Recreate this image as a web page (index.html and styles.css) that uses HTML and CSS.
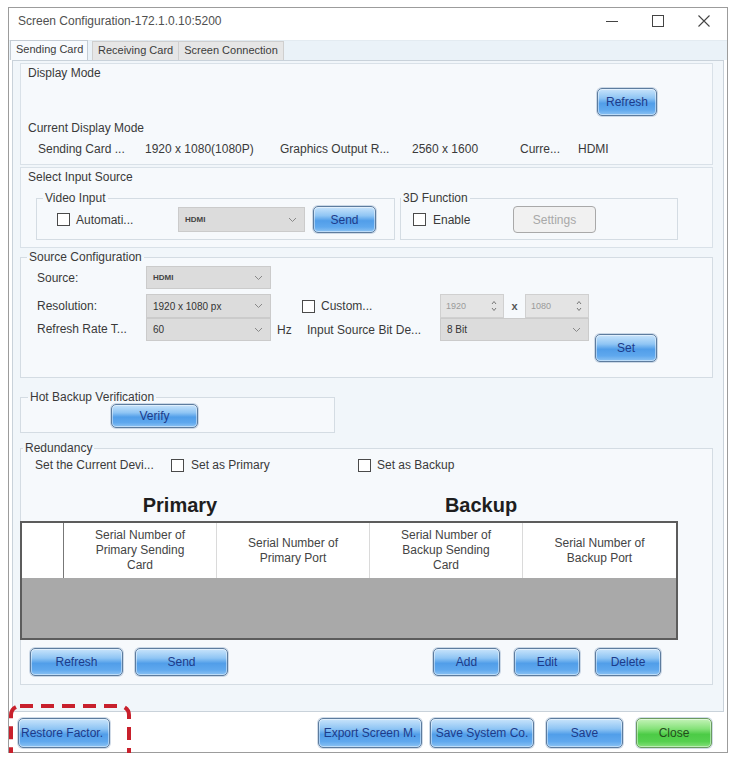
FILE: index.html
```html
<!DOCTYPE html>
<html>
<head>
    <title>Screen Configuration</title>
    <meta charset="UTF-8">
    <link rel="stylesheet" href="styles.css">
</head>
<body>
<div class="window">
    <div class="titlebar">
        <span class="title">Screen Configuration-172.1.0.10:5200</span>
        <div class="controls">
            <span class="ctl"><svg width="14" height="14" viewBox="0 0 14 14"><line x1="1" y1="7.5" x2="13" y2="7.5" stroke="#444" stroke-width="1"/></svg></span>
            <span class="ctl"><svg width="14" height="14" viewBox="0 0 14 14"><rect x="1.5" y="1.5" width="11" height="11" fill="none" stroke="#444" stroke-width="1"/></svg></span>
            <span class="ctl"><svg width="14" height="14" viewBox="0 0 14 14"><path d="M1.5 1.5 L12.5 12.5 M12.5 1.5 L1.5 12.5" stroke="#444" stroke-width="1.1"/></svg></span>
        </div>
    </div>

    <div class="tabs">
        <span class="tab active">Sending Card</span>
        <span class="tab">Receiving Card</span>
        <span class="tab">Screen Connection</span>
    </div>

    <div class="pane">
        <!-- display mode -->
        <div class="group display-mode">
            <div class="group-title">Display Mode</div>
            <div class="refresh-row"><button class="btn btn-refresh">Refresh</button></div>
            <div class="group-title sub">Current Display Mode</div>
            <div class="info-row">
                <span>Sending Card ...</span>
                <span>1920 x 1080(1080P)</span>
                <span>Graphics Output R...</span>
                <span>2560 x 1600</span>
                <span>Curre...</span>
                <span>HDMI</span>
            </div>
        </div>

        <!-- input source -->
        <div class="group input-source">
            <div class="group-title">Select Input Source</div>
            <div class="subgroups">
                <fieldset class="video-input">
                    <legend>Video Input</legend>
                    <div class="row">
                        <span class="check"></span>
                        <span class="auto-label">Automati...</span>
                        <div class="combo combo-video"><span class="small-caps">HDMI</span><svg class="chev" width="9" height="6" viewBox="0 0 9 6"><path d="M1 1 L4.5 4.5 L8 1" fill="none" stroke="#888" stroke-width="1"/></svg></div>
                        <button class="btn btn-send">Send</button>
                    </div>
                </fieldset>
                <fieldset class="three-d">
                    <legend>3D Function</legend>
                    <div class="row">
                        <span class="check"></span>
                        <span class="enable-label">Enable</span>
                        <button class="btn-disabled">Settings</button>
                    </div>
                </fieldset>
            </div>
        </div>

        <!-- source configuration -->
        <fieldset class="box source-config">
            <legend>Source Configuration</legend>
            <div class="src-row">
                <span class="src-label">Source:</span>
                <div class="combo combo-src"><span class="small-caps">HDMI</span><svg class="chev" width="9" height="6" viewBox="0 0 9 6"><path d="M1 1 L4.5 4.5 L8 1" fill="none" stroke="#888" stroke-width="1"/></svg></div>
            </div>
            <div class="src-row second">
                <span class="src-label">Resolution:</span>
                <div class="combo combo-src"><span>1920 x 1080 px</span><svg class="chev" width="9" height="6" viewBox="0 0 9 6"><path d="M1 1 L4.5 4.5 L8 1" fill="none" stroke="#888" stroke-width="1"/></svg></div>
                <div class="custom">
                    <span class="check"></span>
                    <span>Custom...</span>
                </div>
                <div class="spin"><span>1920</span><svg width="6" height="12" viewBox="0 0 6 12"><path d="M1 4 L3 1.5 L5 4 M1 8 L3 10.5 L5 8" fill="none" stroke="#777" stroke-width="1"/></svg></div>
                <span class="times">x</span>
                <div class="spin"><span>1080</span><svg width="6" height="12" viewBox="0 0 6 12"><path d="M1 4 L3 1.5 L5 4 M1 8 L3 10.5 L5 8" fill="none" stroke="#777" stroke-width="1"/></svg></div>
            </div>
            <div class="src-row third">
                <span class="src-label">Refresh Rate T...</span>
                <div class="combo combo-src"><span>60</span><svg class="chev" width="9" height="6" viewBox="0 0 9 6"><path d="M1 1 L4.5 4.5 L8 1" fill="none" stroke="#888" stroke-width="1"/></svg></div>
                <span class="hz">Hz</span>
                <span class="bit-label">Input Source Bit De...</span>
                <div class="combo combo-bit"><span>8 Bit</span><svg class="chev" width="9" height="6" viewBox="0 0 9 6"><path d="M1 1 L4.5 4.5 L8 1" fill="none" stroke="#888" stroke-width="1"/></svg></div>
                <button class="btn btn-set">Set</button>
            </div>
        </fieldset>

        <!-- hot backup -->
        <fieldset class="box hot-backup">
            <legend>Hot Backup Verification</legend>
            <button class="btn btn-verify">Verify</button>
        </fieldset>

        <!-- redundancy -->
        <fieldset class="box redundancy">
            <legend>Redundancy</legend>
            <div class="set-row">
                <span class="set-label">Set the Current Devi...</span>
                <span class="check"></span>
                <span class="set-primary">Set as Primary</span>
                <span class="check"></span>
                <span class="set-backup">Set as Backup</span>
            </div>
            <div class="side-titles">
                <span>Primary</span>
                <span>Backup</span>
            </div>
            <table class="serials">
                <colgroup>
                    <col style="width:41px">
                    <col style="width:153px">
                    <col style="width:153px">
                    <col style="width:153px">
                    <col style="width:154px">
                </colgroup>
                <thead>
                    <tr>
                        <th></th>
                        <th>Serial Number of<br>Primary Sending<br>Card</th>
                        <th>Serial Number of<br>Primary Port</th>
                        <th>Serial Number of<br>Backup Sending<br>Card</th>
                        <th>Serial Number of<br>Backup Port</th>
                    </tr>
                </thead>
                <tbody>
                    <tr><td colspan="5"></td></tr>
                </tbody>
            </table>
            <div class="table-actions">
                <button class="btn btn-wide">Refresh</button>
                <button class="btn btn-wide">Send</button>
                <button class="btn btn-add">Add</button>
                <button class="btn btn-edit">Edit</button>
                <button class="btn btn-delete">Delete</button>
            </div>
        </fieldset>
    </div>

    <div class="footer">
        <button class="btn btn-restore">Restore Factor.</button>
        <button class="btn btn-export">Export Screen M.</button>
        <button class="btn btn-savesys">Save System Co.</button>
        <button class="btn btn-save">Save</button>
        <button class="btn btn-close">Close</button>
    </div>

    <!-- dashed marker around the restore button -->
    <svg class="marker" width="122" height="60" viewBox="0 0 122 60">
        <rect x="2" y="2" width="118" height="56" rx="9" ry="9" fill="none" stroke="#c8202c" stroke-width="4" stroke-dasharray="13 8"/>
    </svg>
</div>
</body>
</html>
```

FILE: styles.css
```css
* {
    box-sizing: border-box;
}

body {
    margin: 0;
    background-color: #fff;
    font-family: "Liberation Sans", Arial, sans-serif;
    font-size: 12px;
    color: #3a3a3a;
}

.window {
    position: relative;
    margin: 7px 0 0 8px;
    width: 720px;
    height: 746px;
    border: 1px solid #9c9c9c;
    background-color: #fff;
    display: flex;
    flex-direction: column;
}

/* title bar */
.titlebar {
    height: 32px;
    display: flex;
    align-items: flex-start;
    padding: 6px 0 0 9px;
}

.title {
    line-height: 14px;
    color: #505050;
}

.controls {
    margin-left: auto;
    margin-top: -1px;
    display: flex;
}

.ctl {
    width: 46px;
    height: 16px;
    display: flex;
    justify-content: center;
    align-items: center;
}

/* tabs */
.tabs {
    height: 20px;
    display: flex;
    align-items: flex-end;
    padding-left: 1px;
    background-color: #eaf2f8;
    border-top: 1px solid #e3ebf1;
}

.tab {
    height: 19px;
    line-height: 17px;
    padding: 0 5px;
    font-size: 11px;
    white-space: nowrap;
    color: #3c3c3c;
    background-color: #e6e6e6;
    border: 1px solid #cfcfcf;
    border-bottom: none;
}

.tab.active {
    width: 78px;
    height: 20px;
    padding: 0 0 0 5px;
    background-color: #f7fafd;
    border-color: #c4ccd4;
    margin-right: 4px;
}

.tab + .tab {
    border-left: none;
}

.tab.active + .tab {
    border-left: 1px solid #cfcfcf;
}

/* main tab page */
.pane {
    flex: 1;
    margin: 0 3px;
    padding: 2px 10px 0 7px;
    background-color: #f1f6fa;
    border: 1px solid #c9d2da;
}

.group {
    border: 1px solid #d9e1e8;
    background-color: #f6f9fc;
    padding: 2px 0 0 7px;
}

.group-title {
    line-height: 14px;
}

.display-mode {
    height: 102px;
}

.refresh-row {
    display: flex;
    justify-content: flex-end;
    padding-right: 55px;
    margin-top: 8px;
}

.btn-refresh {
    width: 60px;
    height: 28px;
}

.display-mode .sub {
    margin-top: 5px;
}

.info-row {
    display: grid;
    grid-template-columns: 107px 135px 132px 108px 58px auto;
    margin: 7px 0 0 10px;
    line-height: 14px;
}

.input-source {
    height: 81px;
    margin-top: 2px;
}

.subgroups {
    display: flex;
    margin: 7px 0 0 8px;
}

fieldset {
    margin: 0;
    min-width: 0;
    border: 1px solid #d4dce3;
}

legend {
    line-height: 14px;
    padding: 0 2px;
}

.video-input {
    width: 359px;
    padding: 1px 0 6px 20px;
}

.video-input legend {
    margin-left: -14px;
}

.three-d {
    width: 278px;
    margin-left: 5px;
    padding: 1px 0 6px 12px;
}

.three-d legend {
    margin-left: -12px;
}

.row {
    display: flex;
    align-items: center;
    height: 27px;
}

.check {
    flex: none;
    width: 13px;
    height: 13px;
    border: 1px solid #4a4a4a;
    background-color: #fff;
}

.auto-label {
    width: 102px;
    margin-left: 6px;
}

.enable-label {
    width: 80px;
    margin-left: 7px;
}

/* combo boxes */
.combo {
    display: flex;
    align-items: center;
    justify-content: space-between;
    padding: 0 7px 0 6px;
    background-color: #dcdcdc;
    border: 1px solid #cbcbcb;
    font-size: 10px;
    color: #333;
}

.small-caps {
    font-size: 8px;
    font-weight: bold;
    color: #444;
}

.combo-video {
    width: 127px;
    height: 25px;
}

.btn-send {
    width: 63px;
    height: 27px;
    margin-left: 8px;
}

.btn-disabled {
    width: 83px;
    height: 27px;
    font-family: "Liberation Sans", Arial, sans-serif;
    font-size: 12px;
    color: #a8a8a8;
    background-color: #f1f1f1;
    border: 1px solid #a9a9a9;
    border-radius: 4px;
}

/* fieldset boxes */
.box {
    background-color: #f6f9fc;
}

.source-config {
    margin-top: 2px;
    padding: 2px 0 15px 16px;
}

.source-config legend {
    margin-left: -10px;
}

.src-row {
    display: flex;
    align-items: center;
    height: 23px;
}

.src-row.second {
    height: 24px;
    margin-top: 5px;
}

.src-row.third {
    height: 44px;
    align-items: flex-start;
}

.src-label {
    width: 109px;
    line-height: 16px;
}

.third .src-label {
    margin-top: 3px;
}

.combo-src {
    width: 125px;
    height: 100%;
}

.third .combo-src,
.combo-bit {
    height: 23px;
}

.custom {
    display: flex;
    align-items: center;
    width: 138px;
    margin-left: 31px;
}

.custom .check {
    margin-right: 6px;
}

.spin {
    display: flex;
    align-items: center;
    justify-content: space-between;
    width: 64px;
    height: 24px;
    padding: 0 6px 0 5px;
    background-color: #e4e4e4;
    border: 1px solid #d0d0d0;
    font-size: 9px;
    color: #9a9a9a;
}

.times {
    width: 21px;
    text-align: center;
    font-size: 11px;
    font-weight: bold;
    color: #555;
}

.hz {
    width: 30px;
    margin: 5px 0 0 6px;
}

.bit-label {
    width: 133px;
    margin-top: 5px;
}

.combo-bit {
    width: 149px;
}

.btn-set {
    width: 62px;
    height: 28px;
    margin: 16px 0 0 6px;
}

.hot-backup {
    width: 315px;
    margin-top: 12px;
    padding: 0 0 4px 90px;
}

.hot-backup legend {
    margin-left: -83px;
}

.btn-verify {
    width: 87px;
    height: 24px;
}

.redundancy {
    margin-top: 8px;
    padding: 0 0 8px 0;
}

.redundancy legend {
    margin-left: 2px;
}

.set-row {
    display: flex;
    align-items: center;
    height: 14px;
    margin-top: 3px;
    padding-left: 14px;
}

.set-label {
    width: 136px;
}

.set-primary {
    width: 167px;
    margin-left: 7px;
}

.set-backup {
    margin-left: 6px;
}

.side-titles {
    display: grid;
    grid-template-columns: 318px 284px;
    margin-top: 22px;
    line-height: 22px;
    font-size: 20px;
    font-weight: bold;
    color: #1e1e1e;
    text-align: center;
}

/* serial number table */
.serials {
    width: 658px;
    margin: 5px 0 0 -1px;
    border: 2px solid #5c5c5c;
    border-spacing: 0;
    table-layout: fixed;
}

.serials th {
    height: 55px;
    padding: 0;
    background-color: #fff;
    font-weight: normal;
    font-size: 12px;
    line-height: 15px;
    color: #444;
    text-align: center;
    border-left: 1px solid #dadada;
}

.serials th:first-child {
    border-left: none;
}

.serials th:nth-child(2) {
    border-left: 1px solid #777;
}

.serials td {
    height: 60px;
    background-color: #a9a9a9;
}

.table-actions {
    display: flex;
    margin-top: 8px;
    padding: 0 51px 0 9px;
}

.btn-wide {
    width: 93px;
    height: 28px;
    margin-right: 12px;
}

.btn-add {
    width: 67px;
    height: 28px;
    margin-left: auto;
}

.btn-edit {
    width: 66px;
    height: 28px;
    margin-left: 14px;
}

.btn-delete {
    width: 66px;
    height: 28px;
    margin-left: 15px;
}

/* bottom button bar */
.footer {
    height: 40px;
    display: flex;
    padding: 6px 15px 0 9px;
    background-color: #fff;
}

.footer .btn {
    height: 30px;
}

.btn-restore {
    width: 92px;
    text-align: left;
    padding-left: 2px;
}

.btn-export {
    width: 104px;
    margin-left: auto;
    padding: 0 1px;
}

.btn-savesys {
    width: 104px;
    margin-left: 8px;
    padding: 0 1px;
}

.btn-save {
    width: 77px;
    margin-left: 12px;
}

.btn-close {
    width: 76px;
    margin-left: 13px;
}

/* glossy blue buttons */
.btn {
    font-family: "Liberation Sans", Arial, sans-serif;
    font-size: 12px;
    color: #1d3b8a;
    white-space: nowrap;
    overflow: hidden;
    border: 1px solid #5d7c9e;
    border-radius: 5px;
    background: linear-gradient(to bottom, #c9e4fb 0%, #8fc5f4 35%, #519ee9 55%, #5fa8ee 80%, #8cc3f3 100%);
    box-shadow: inset 0 0 0 1px rgba(255, 255, 255, 0.45), 0 0 0 1px rgba(150, 175, 205, 0.45);
}

.btn-close {
    color: #234d1c;
    border-color: #6a9a60;
    background: linear-gradient(to bottom, #c4f3b8 0%, #86e27a 35%, #4ccb46 55%, #55d04f 80%, #86e07c 100%);
}

.marker {
    position: absolute;
    left: 0;
    top: 696px;
}
```
